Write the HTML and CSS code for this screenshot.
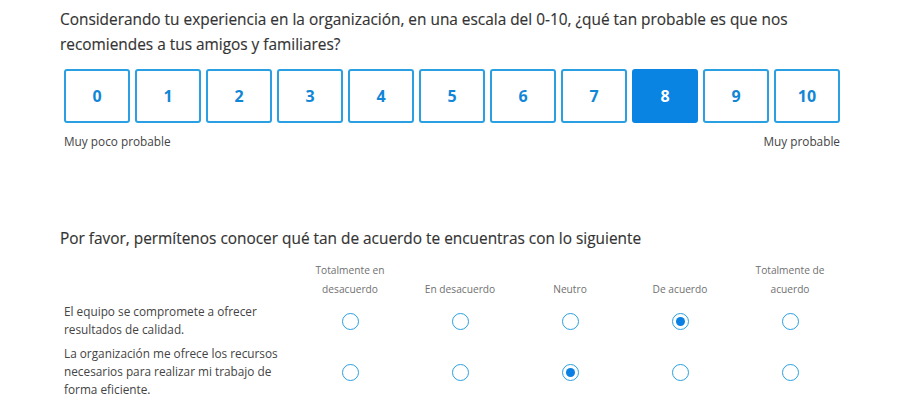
FILE: index.html
```
<!DOCTYPE html>
<html lang="es">
<head>
    <meta charset="UTF-8">
    <meta name="viewport" content="width=device-width, initial-scale=1.0">
    <title>Encuesta</title>
    <link rel="stylesheet" href="styles.css">
</head>
<body>
    <div class="survey">
        <h2 class="question">Considerando tu experiencia en la organización, en una escala del 0-10, ¿qué tan probable es que nos recomiendes a tus amigos y familiares?</h2>
        <div class="scale">
            <button class="scale-btn">0</button>
            <button class="scale-btn">1</button>
            <button class="scale-btn">2</button>
            <button class="scale-btn">3</button>
            <button class="scale-btn">4</button>
            <button class="scale-btn">5</button>
            <button class="scale-btn">6</button>
            <button class="scale-btn">7</button>
            <button class="scale-btn selected">8</button>
            <button class="scale-btn">9</button>
            <button class="scale-btn">10</button>
        </div>
        <div class="scale-labels">
            <span>Muy poco probable</span>
            <span>Muy probable</span>
        </div>

        <h2 class="question second">Por favor, permítenos conocer qué tan de acuerdo te encuentras con lo siguiente</h2>
        <div class="matrix">
            <div></div>
            <div class="col-head">Totalmente en desacuerdo</div>
            <div class="col-head">En desacuerdo</div>
            <div class="col-head">Neutro</div>
            <div class="col-head">De acuerdo</div>
            <div class="col-head">Totalmente de acuerdo</div>

            <div class="row-label">El equipo se compromete a ofrecer resultados de calidad.</div>
            <div class="cell"><input type="radio" name="q1"></div>
            <div class="cell"><input type="radio" name="q1"></div>
            <div class="cell"><input type="radio" name="q1"></div>
            <div class="cell"><input type="radio" name="q1" checked></div>
            <div class="cell"><input type="radio" name="q1"></div>

            <div class="row-label">La organización me ofrece los recursos necesarios para realizar mi trabajo de forma eficiente.</div>
            <div class="cell"><input type="radio" name="q2"></div>
            <div class="cell"><input type="radio" name="q2"></div>
            <div class="cell"><input type="radio" name="q2" checked></div>
            <div class="cell"><input type="radio" name="q2"></div>
            <div class="cell"><input type="radio" name="q2"></div>
        </div>
    </div>
</body>
</html>
```

FILE: styles.css
```
body {
    margin: 0;
    padding: 0;
    background: #fff;
    font-family: 'Open Sans', sans-serif;
    color: #3b3b3b;
}
.survey {
    padding: 7px 60px 0 60px;
    width: 780px;
}
.question {
    margin: 0;
    font-size: 15.4px;
    font-weight: 400;
    line-height: 25px;
    color: #333;
    -webkit-text-stroke: 0.15px #333;
}
.question.second {
    margin-top: 77px;
}
.scale {
    display: grid;
    grid-template-columns: repeat(11, 66px);
    gap: 5px;
    margin: 12px 0 0 4px;
}
.scale-btn {
    height: 54px;
    background: #fff;
    border: 2px solid #2aa0e2;
    border-radius: 3px;
    color: #1286d6;
    font-family: 'Open Sans', sans-serif;
    font-size: 16px;
    font-weight: 700;
    cursor: pointer;
}
.scale-btn.selected {
    background: #0a84e2;
    border-color: #0a84e2;
    color: #fff;
}
.scale-labels {
    display: flex;
    justify-content: space-between;
    width: 776px;
    margin: 10px 0 0 4px;
    font-size: 11.8px;
    line-height: 16px;
    color: #444;
}
.matrix {
    display: grid;
    grid-template-columns: 231px repeat(5, 110px);
    align-items: center;
    margin: 10px 0 0 4px;
}
.col-head {
    align-self: end;
    text-align: center;
    font-size: 10.2px;
    line-height: 19px;
    color: #707070;
    padding: 0 14px;
}
.row-label {
    font-size: 11.8px;
    line-height: 18px;
    color: #444;
    padding: 3px 0;
}
.cell {
    display: flex;
    justify-content: center;
}
.cell input {
    appearance: none;
    -webkit-appearance: none;
    margin: 3px 0 0 0;
    width: 17px;
    height: 17px;
    border: 1.6px solid #2a9fe0;
    border-radius: 50%;
    background: #fff;
    display: grid;
    place-content: center;
}
.cell input:checked::before {
    content: "";
    width: 9px;
    height: 9px;
    border-radius: 50%;
    background: #0a80e2;
}
```
